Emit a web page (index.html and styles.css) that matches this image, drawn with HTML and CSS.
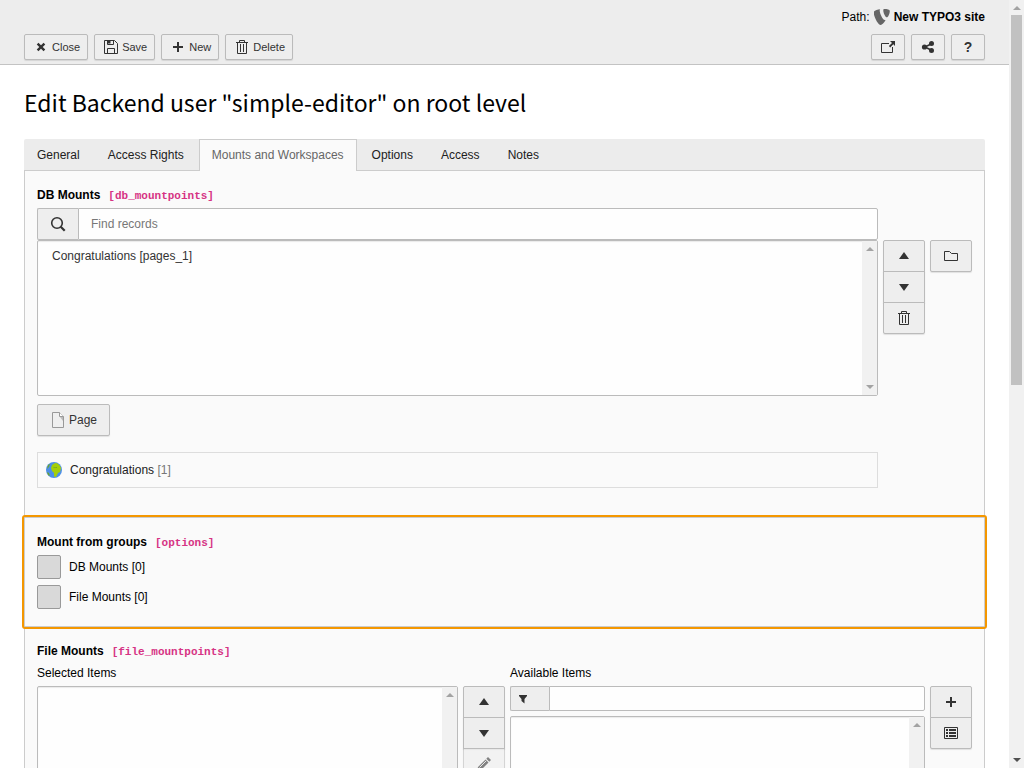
FILE: index.html
```html
<!DOCTYPE html>
<html lang="en">
<head>
<meta charset="utf-8">
<title>Edit Backend user</title>
<link rel="stylesheet" href="styles.css">
</head>
<body>
<svg class="sprite" aria-hidden="true">
  <symbol id="i-close" viewBox="0 0 16 16"><path d="M4.600 4.600l6.800 6.800M11.400 4.600l-6.800 6.800" fill="none" stroke="currentColor" stroke-width="2.400"/></symbol>
  <symbol id="i-save" viewBox="0 0 16 16"><path d="M1.500 1.500h10l3 3v10h-13zM4.500 14.500v-5h7v5M4.500 1.500v4h6v-4" fill="none" stroke="currentColor"/><path d="M4.500 1.500h3v3h-3z" fill="currentColor"/></symbol>
  <symbol id="i-plus" viewBox="0 0 16 16"><path d="M7 3h2v4h4v2H9v4H7V9H3V7h4z" fill="currentColor"/></symbol>
  <symbol id="i-trash" viewBox="0 0 16 16"><path d="M2 3.500h12M5.500 3v-1.500h5V3M3.500 4v10.500h9V4M6.500 5v8M9.500 5v8" fill="none" stroke="currentColor"/></symbol>
  <symbol id="i-open" viewBox="0 0 16 16"><path d="M9 4.500H1.500v9h11V8" fill="none" stroke="currentColor"/><path d="M10 2h5v5l-1.700-1.700-3.100 3.100-1.300-1.300L12 4z" fill="currentColor"/></symbol>
  <symbol id="i-share" viewBox="0 0 16 16"><path d="M12 4.500L5 8l7 3.500" fill="none" stroke="currentColor" stroke-width="1.600"/><g fill="currentColor"><circle cx="4.500" cy="8" r="2.600"/><circle cx="11.500" cy="4.500" r="2.500"/><circle cx="11.500" cy="11.500" r="2.500"/></g></symbol>
  <symbol id="i-search" viewBox="0 0 16 16"><circle cx="7" cy="7" r="5.300" fill="none" stroke="currentColor" stroke-width="1.600"/><path d="M10.700 10.700l4 4" stroke="currentColor" stroke-width="2.200"/></symbol>
  <symbol id="i-up" viewBox="0 0 16 16"><path d="M8 4l5 7H3z" fill="currentColor"/></symbol>
  <symbol id="i-down" viewBox="0 0 16 16"><path d="M8 12L3 5h10z" fill="currentColor"/></symbol>
  <symbol id="i-folder" viewBox="0 0 16 16"><path d="M1.500 3.500h5l2 2h6v7h-13z" fill="none" stroke="currentColor"/></symbol>
  <symbol id="i-page" viewBox="0 0 16 16"><path d="M2.500.5h7l4 4v11h-11z" fill="#efefef" stroke="#999"/><path d="M9.500.5v4h4" fill="#fff" stroke="#999"/><path d="M10 5h3v4z" fill="#bbb"/></symbol>
  <symbol id="i-globe" viewBox="0 0 16 16"><circle cx="8" cy="8" r="8" fill="#4d8fe8"/><path d="M6 3l3-2c3 0 5 2 6 5l-1 4-2 1-2 4-2-.5V11l-2-2-1-3z" fill="#a4cf0a"/><path d="M2 3l2-1-1 3-2 2zM1 10l2 1 1 3-2-1zM7 5l2 .5 2-.5v1H8z" fill="#6ea52b"/></symbol>
  <symbol id="i-filter" viewBox="0 0 16 16"><path d="M4 4h8v1L9.500 8v4.500L6.500 10V8L4 5z" fill="currentColor"/></symbol>
  <symbol id="i-list" viewBox="0 0 16 16"><path d="M1.500 2.500h13v11h-13z" fill="none" stroke="currentColor"/><path d="M3 4h2v2H3zM6 4h7v2H6zM3 7h2v2H3zM6 7h7v2H6zM3 10h2v2H3zM6 10h7v2H6z" fill="currentColor"/></symbol>
  <symbol id="i-pencil" viewBox="0 0 16 16"><path d="M1 15l1-4 7.500-7.500 3 3L5 14zM10.300 2.700L12 1l3 3-1.700 1.700z" fill="currentColor"/><path d="M3.500 11.500L10 5" stroke="#ddd"/></symbol>
  <symbol id="i-brand" viewBox="0 0 16 16"><path d="M11.600 11c-.3.100-.5.100-.8.100C8.700 11.100 5.700 4 5.700 1.700c0-.8.200-1.100.5-1.400C3.700.6.900 1.400 0 2.500c-.2.300-.3.700-.3 1.200C-.3 7.300 3.900 16 6.700 16c1.300 0 3.400-2.200 4.900-5M10.400 0C13 0 15.800.4 15.800 1.900c0 2.900-1.900 6.400-2.800 6.400-1.700 0-3.700-4.600-3.700-6.900 0-1.100.3-1.400 1.100-1.400" fill="currentColor"/></symbol>
</svg>
<div class="module">
  <header class="docheader">
    <div class="path">Path: <svg class="icon brand"><use href="#i-brand"/></svg> <strong>New TYPO3 site</strong></div>
    <div class="toolbar">
      <button class="btn btn-sm"><svg class="icon"><use href="#i-close"/></svg>Close</button>
      <button class="btn btn-sm"><svg class="icon"><use href="#i-save"/></svg>Save</button>
      <button class="btn btn-sm"><svg class="icon"><use href="#i-plus"/></svg>New</button>
      <button class="btn btn-sm"><svg class="icon"><use href="#i-trash"/></svg>Delete</button>
      <span class="spacer"></span>
      <button class="btn btn-sm btn-icon" aria-label="Open in new window"><svg class="icon"><use href="#i-open"/></svg></button>
      <button class="btn btn-sm btn-icon" aria-label="Share"><svg class="icon"><use href="#i-share"/></svg></button>
      <button class="btn btn-sm btn-icon" aria-label="Help"><span class="icon help">?</span></button>
    </div>
  </header>
  <main class="body">
    <h1>Edit Backend user "simple-editor" on root level</h1>
    <nav class="tabs">
      <a href="#general">General</a>
      <a href="#rights">Access Rights</a>
      <a href="#mounts" class="active">Mounts and Workspaces</a>
      <a href="#options">Options</a>
      <a href="#access">Access</a>
      <a href="#notes">Notes</a>
    </nav>
    <div class="panel">
      <section class="section">
        <h2><label for="find">DB Mounts</label><code>[db_mountpoints]</code></h2>
        <div class="mounts">
          <div class="search">
            <span class="addon"><svg class="icon"><use href="#i-search"/></svg></span>
            <input id="find" type="text" placeholder="Find records">
          </div>
          <div class="listbox">
            <select multiple size="8" aria-label="DB Mounts"><option>Congratulations [pages_1]</option></select>
            <span class="scroll"><i class="arrow up"></i><i class="arrow down"></i></span>
          </div>
          <div class="group">
            <button class="btn" aria-label="Move up"><svg class="icon"><use href="#i-up"/></svg></button>
            <button class="btn" aria-label="Move down"><svg class="icon"><use href="#i-down"/></svg></button>
            <button class="btn" aria-label="Remove"><svg class="icon"><use href="#i-trash"/></svg></button>
          </div>
          <div class="group">
            <button class="btn" aria-label="Browse"><svg class="icon"><use href="#i-folder"/></svg></button>
          </div>
          <div class="below">
            <button class="btn page"><svg class="icon"><use href="#i-page"/></svg>Page</button>
            <div class="record"><svg class="icon"><use href="#i-globe"/></svg><span>Congratulations <span class="uid">[1]</span></span></div>
          </div>
        </div>
      </section>
      <section class="section highlight">
        <h2>Mount from groups<code>[options]</code></h2>
        <label class="check"><input type="checkbox">DB Mounts [0]</label>
        <label class="check"><input type="checkbox">File Mounts [0]</label>
      </section>
      <section class="section">
        <h2>File Mounts<code>[file_mountpoints]</code></h2>
        <div class="files">
          <label class="caption" for="selected">Selected Items</label>
          <label class="caption available" for="available">Available Items</label>
          <div class="listbox">
            <select id="selected" multiple size="8"></select>
            <span class="scroll"><i class="arrow up"></i><i class="arrow down"></i></span>
          </div>
          <div class="group">
            <button class="btn" aria-label="Move up"><svg class="icon"><use href="#i-up"/></svg></button>
            <button class="btn" aria-label="Move down"><svg class="icon"><use href="#i-down"/></svg></button>
            <button class="btn" aria-label="Edit" disabled><svg class="icon"><use href="#i-pencil"/></svg></button>
          </div>
          <div class="choices">
            <div class="search filter">
              <span class="addon"><svg class="icon"><use href="#i-filter"/></svg></span>
              <input type="text" aria-label="Filter">
            </div>
            <div class="listbox">
              <select id="available" multiple size="8"></select>
              <span class="scroll"><i class="arrow up"></i><i class="arrow down"></i></span>
            </div>
          </div>
          <div class="group">
            <button class="btn" aria-label="Add"><svg class="icon"><use href="#i-plus"/></svg></button>
            <button class="btn" aria-label="List"><svg class="icon"><use href="#i-list"/></svg></button>
          </div>
        </div>
      </section>
    </div>
  </main>
</div>
<div class="scroll page-scroll"><i class="arrow up"></i><span class="thumb"></span><i class="arrow down dark"></i></div>
</body>
</html>
```

FILE: styles.css
```css
* { box-sizing: border-box; }

body {
  display: flex;
  height: 100vh;
  margin: 0;
  overflow: hidden;
  background: #fff;
  color: #000;
  font: 12px/18px "Liberation Sans", Arial, sans-serif;
}

button, input, select { font: inherit; color: inherit; }

.sprite { position: absolute; width: 0; height: 0; }
.icon { display: block; flex: none; width: 16px; height: 16px; }

.module { flex: 1; min-width: 0; overflow: hidden; }

/* Header */
.docheader {
  padding: 0 24px 4px;
  border-bottom: 1px solid #c3c3c3;
  background: #ededed;
}
.path {
  display: flex;
  align-items: center;
  justify-content: flex-end;
  gap: 4px;
  height: 34px;
}
.brand { color: #666; }
.toolbar { display: flex; gap: 6px; }
.spacer { flex: 1; }

.btn {
  display: flex;
  align-items: center;
  justify-content: center;
  height: 32px;
  padding: 0 12px;
  border: 1px solid #bbb;
  border-radius: 2px;
  background: #eee;
  box-shadow: 0 1px 1px rgba(0, 0, 0, .1);
  color: #333;
}
.btn-sm { gap: 3px; height: 26px; padding: 0 7px 0 8px; font-size: 11px; }
.btn-icon { padding: 0 8px; }
.help { font-weight: bold; font-size: 14px; line-height: 16px; }

/* Body */
.body { padding: 20px 24px 0; }
h1 {
  margin: 0 0 20px;
  font: 400 23px/34px "Noto Sans CJK SC", sans-serif;
}

.tabs {
  display: flex;
  gap: 2px;
  border-bottom: 1px solid #ccc;
  border-radius: 2px 2px 0 0;
  background: #ececec;
}
.tabs a {
  height: 31px;
  padding: 6px 12px;
  border: 1px solid transparent;
  border-bottom: 0;
  color: #212121;
  text-decoration: none;
}
.tabs .active {
  height: 32px;
  margin-bottom: -1px;
  border-color: #ccc;
  background: #fafafa;
  color: #666;
}

.panel { border: 1px solid #ccc; border-top: 0; background: #fafafa; }
.section { padding: 15px 12px 29px; }
.highlight {
  margin: 0 -1px;
  padding: 15px 12px 17px;
  border: 1px solid #ccc;
  border-radius: 1px;
  outline: 2px solid #f49700;
}
h2 { margin: 0 0 3px; font-size: 12px; line-height: 18px; }
code {
  margin-left: 8px;
  color: #d63384;
  font: bold 11px/18px "Liberation Mono", monospace;
}

/* Form controls */
.mounts {
  display: grid;
  grid-template-columns: 1fr 42px 42px;
  column-gap: 5px;
  align-items: start;
}
.search { display: flex; grid-column: 1; height: 32px; }
.mounts .search { grid-column: 1 / -1; margin-right: 94px; }
.search .addon {
  display: flex;
  align-items: center;
  justify-content: center;
  width: 41px;
  border: 1px solid #bbb;
  border-right: 0;
  border-radius: 2px 0 0 2px;
  background: #eee;
  color: #333;
}
.search input {
  flex: 1;
  min-width: 0;
  padding: 0 12px;
  border: 1px solid #bbb;
  border-radius: 0 2px 2px 0;
  background: #fefefe;
}
.search input::placeholder { color: #777; }

.listbox {
  display: flex;
  height: 156px;
  border: 1px solid #bbb;
  border-radius: 2px;
  background: #fefefe;
  box-shadow: inset 0 1px 1px rgba(0, 0, 0, .08);
}
.listbox select {
  flex: 1;
  min-width: 0;
  padding: 8px 12px;
  border: 0;
  outline: 0;
  background: transparent;
  color: #333;
  overflow: hidden;
}

.scroll {
  display: flex;
  flex-direction: column;
  align-items: center;
  justify-content: space-between;
  width: 15px;
  padding: 6px 0;
  background: #f1f1f1;
}
.arrow { border: 4px solid transparent; }
.arrow.up { border-top: 0; border-bottom-color: #a3a3a3; }
.arrow.down { border-bottom: 0; border-top-color: #a3a3a3; }
.arrow.dark { border-top-color: #505050; }
.page-scroll { justify-content: flex-start; }
.page-scroll .thumb { width: 11px; height: 49%; margin-top: 5px; background: #c1c1c1; }
.page-scroll .dark { margin-top: auto; }

.group { display: flex; flex-direction: column; }
.group .btn + .btn { margin-top: -1px; }
.group .btn:not(:last-child) { border-bottom-left-radius: 0; border-bottom-right-radius: 0; }
.group .btn + .btn { border-top-left-radius: 0; border-top-right-radius: 0; }
.group .btn:disabled { opacity: .6; }

.below { display: grid; justify-items: start; gap: 16px; padding-top: 8px; }
.page { gap: 3px; }
.record {
  display: flex;
  align-items: center;
  gap: 8px;
  width: 100%;
  height: 36px;
  padding: 0 8px;
  border: 1px solid #ddd;
  color: #212121;
}
.uid { color: #777; }

.check { display: flex; align-items: center; gap: 8px; height: 24px; }
.check + .check { margin-top: 6px; }
.check input {
  width: 24px;
  height: 24px;
  margin: 0;
  border: 1px solid #999;
  border-radius: 2px;
  background: #d9d9d9;
  appearance: none;
}

.files {
  display: grid;
  grid-template-columns: 421fr 42px 415fr 42px;
  column-gap: 5px;
  align-items: start;
}
.caption { grid-column: 1; margin-bottom: 4px; }
.available { grid-column: 3 / -1; }
.filter { height: 25px; margin-bottom: 5px; }
.filter .addon { width: 39px; padding-right: 14px; }
```
